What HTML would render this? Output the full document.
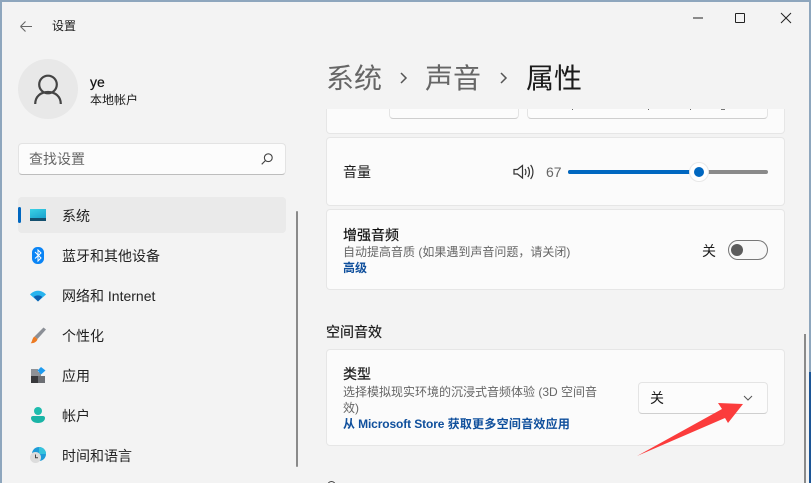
<!DOCTYPE html>
<html lang="zh"><head><meta charset="utf-8">
<style>
*{box-sizing:border-box}
html,body{margin:0;padding:0;width:811px;height:483px;overflow:hidden}
body{background:#f3f3f3;position:relative;font-family:"Liberation Sans","Noto Sans CJK SC",sans-serif;color:#1b1b1b}
.a{position:absolute;white-space:nowrap}
.card{position:absolute;left:326px;width:459px;background:#fbfbfb;border:1px solid #e6e6e6;border-radius:4px}
.nav{position:absolute;left:62px;font-size:14px;line-height:20px;color:#222;white-space:nowrap}
.sub{font-size:12px;line-height:16px;color:#666}
.link{font-size:12px;line-height:16px;color:#0f4f9c;font-weight:bold}
.btn{position:absolute;background:#fcfcfc;border:1px solid #e4e4e4;border-bottom-color:#cfcfcf;border-radius:4px}
svg{position:absolute;overflow:visible}
</style></head>
<body>
<div class="a" style="left:0;top:0;width:811px;height:2px;background:#8ea6bd"></div>
<div class="a" style="left:0;top:0;width:2px;height:483px;background:#8ea6bd"></div>
<div class="a" style="left:809px;top:0;width:2px;height:372px;background:#8ea6bd"></div>
<div class="a" style="left:809px;top:372px;width:2px;height:111px;background:#1c5596"></div>

<svg style="left:19px;top:19px" width="16" height="16" viewBox="0 0 16 16" fill="none" stroke="#666" stroke-width="1.1"><path d="M1.500 7.500H13M1.500 7.500L6.500 2.500M1.500 7.500L6.500 12.500"/></svg>
<div class="a" style="left:52px;top:18px;font-size:12px;line-height:17px">设置</div>

<div class="a" style="left:18px;top:59px;width:60px;height:60px;border-radius:50%;background:#e8e8e8"></div>
<svg style="left:18px;top:59px" width="60" height="60" fill="none" stroke="#444" stroke-width="2.2"><circle cx="30" cy="25.500" r="8.800"/><path d="M17.200 45c0-7.500 5.500-12 12.800-12s12.800 4.500 12.800 12"/></svg>
<div class="a" style="left:90px;top:74px;font-size:14px;line-height:17px;color:#111;-webkit-text-stroke:.2px #111">ye</div>
<div class="a" style="left:90px;top:92px;font-size:12px;line-height:17px">本地帐户</div>

<div class="btn" style="left:18px;top:143px;width:268px;height:32px;border-color:#e3e3e3;border-bottom-color:#bdbdbd"></div>
<div class="a" style="left:29px;top:149px;font-size:14px;line-height:20px;color:#666">查找设置</div>
<svg style="left:261px;top:153px" width="12" height="12" fill="none" stroke="#444" stroke-width="1.100"><circle cx="7.300" cy="4.700" r="3.900"/><path d="M4.500 7.500L.7 11.300"/></svg>

<div class="a" style="left:18px;top:197px;width:268px;height:36px;background:#eaeaea;border-radius:4px"></div>
<div class="a" style="left:18px;top:207px;width:3px;height:16px;background:#0067c0;border-radius:2px"></div>
<div class="a" style="left:296px;top:211px;width:2px;height:256px;background:#8a8a8a;border-radius:1px"></div>

<div class="a" style="left:30px;top:209px;width:16px;height:12px;background:linear-gradient(160deg,#3ad2e6,#1498c8)"></div>
<div class="a" style="left:30px;top:218px;width:16px;height:3px;background:#14506f"></div>
<div class="nav" style="top:206px">系统</div>

<svg style="left:32px;top:247px" width="12" height="17"><rect width="12" height="17" rx="5.500" fill="#0a84f5"/><path d="M3 5l6 6-3 3V3l3 3-6 5.500" fill="none" stroke="#fff" stroke-width="1"/></svg>
<div class="nav" style="top:246px">蓝牙和其他设备</div>

<svg style="left:30px;top:290px" width="16" height="12"><path d="M0 4.500C4.500 -.5 11.500 -.5 16 4.500L8 11.500Z" fill="#27b3ee"/><path d="M3.700 7C6 4.800 10 4.800 12.300 7L8 11.500Z" fill="#0c5fb0"/></svg>
<div class="nav" style="top:286px">网络和 Internet</div>

<svg style="left:30px;top:327px" width="16" height="17"><path d="M13.500 .5L16 2.500 7.500 12 4.500 9.500Z" fill="#8b8f96"/><path d="M4.500 9.500L7.500 12C7 15 3.500 16.500 .7 16.200 2.500 14.500 2 11 4.500 9.500Z" fill="#ec7a22"/></svg>
<div class="nav" style="top:326px">个性化</div>

<svg style="left:31px;top:367px" width="15" height="16"><rect y="2" width="7" height="7" fill="#8e9196"/><rect y="9" width="7" height="7" fill="#38393c"/><rect x="7" y="9" width="7" height="7" fill="#6c6f74"/><rect x="7" y="5" width="3" height="4" fill="#8e9196"/><path d="M10 0l4.500 3.500L10 7.500 6.500 3.500Z" fill="#1d9bf0"/></svg>
<div class="nav" style="top:366px">应用</div>

<svg style="left:31px;top:407px" width="14" height="16"><circle cx="7" cy="4" r="4" fill="#1ebcae"/><path d="M0 11c0-1.500 1-2 2-2h10c1 0 2 .5 2 2 0 3-3 5-7 5s-7-2-7-5Z" fill="#1ab4a6"/></svg>
<div class="nav" style="top:406px">帐户</div>

<svg style="left:30px;top:447px" width="16" height="16"><circle cx="9" cy="7" r="7" fill="#1e9bd8"/><path d="M9 0a7 7 0 0 1 7 7H9Z" fill="#35c3dc"/><circle cx="5.500" cy="10.500" r="5.500" fill="#dcdcdc"/><path d="M5.500 7.500v3.300h2.500" fill="none" stroke="#444" stroke-width="1"/></svg>
<div class="nav" style="top:446px">时间和语言</div>

<svg style="left:693px;top:17px" width="10" height="2"><path d="M0 1h10" stroke="#222" stroke-width="1"/></svg>
<div class="a" style="left:735px;top:13px;width:10px;height:10px;border:1px solid #222;border-radius:1px"></div>
<svg style="left:781px;top:13px" width="10" height="10" fill="none" stroke="#222" stroke-width="1"><path d="M0 0l10 10M10 0L0 10"/></svg>

<div class="card" style="top:90px;height:44px"></div>
<div class="btn" style="left:389px;top:90px;width:130px;height:29px"></div>
<div class="btn" style="left:527px;top:90px;width:241px;height:29px"></div>
<div class="a" style="left:320px;top:60px;width:470px;height:49px;background:#f3f3f3"></div>
<div class="a" style="left:572px;top:109px;width:1px;height:1px;background:#666"></div>
<div class="a" style="left:648px;top:109px;width:1px;height:1px;background:#666"></div>
<div class="a" style="left:690px;top:109px;width:1px;height:1px;background:#666"></div>
<div class="a" style="left:721px;top:109px;width:4px;height:1px;background:#777"></div>

<div class="a" style="left:326px;top:60px;font-size:28px;line-height:38px;color:#666">系统</div>
<svg style="left:400px;top:72px" width="8" height="12" fill="none" stroke="#555" stroke-width="1.500"><path d="M1 1l5 5-5 5"/></svg>
<div class="a" style="left:425px;top:60px;font-size:28px;line-height:38px;color:#666">声音</div>
<svg style="left:500px;top:72px" width="8" height="12" fill="none" stroke="#555" stroke-width="1.500"><path d="M1 1l5 5-5 5"/></svg>
<div class="a" style="left:526px;top:60px;font-size:28px;line-height:38px;color:#1b1b1b">属性</div>

<div class="card" style="top:137px;height:69px"></div>
<div class="a" style="left:343px;top:162px;font-size:14px;line-height:20px">音量</div>
<svg style="left:513px;top:163px" width="22" height="18" fill="none" stroke="#333" stroke-width="1.200"><path d="M1 6.500h3.500L9.500 2.500v12.500L4.500 11H1Z"/><path d="M12 6c1.300 1.700 1.300 4.300 0 6M14.800 4c2.200 3 2.200 7 0 10M17.600 2c3.100 4 3.100 10 0 14"/></svg>
<div class="a" style="left:546px;top:163px;font-size:14px;line-height:18px;color:#666">67</div>
<div class="a" style="left:568px;top:170px;width:200px;height:4px;background:#8a8a8a;border-radius:2px"></div>
<div class="a" style="left:568px;top:170px;width:125px;height:4px;background:#0067c0;border-radius:2px"></div>
<div class="a" style="left:689px;top:162px;width:20px;height:20px;border-radius:50%;background:#fff;border:1px solid #e8e8e8"></div>
<div class="a" style="left:694px;top:167px;width:10px;height:10px;border-radius:50%;background:#0067c0"></div>

<div class="card" style="top:209px;height:81px"></div>
<div class="a" style="left:343px;top:225px;font-size:14px;line-height:20px;color:#111;-webkit-text-stroke:.2px #111">增强音频</div>
<div class="a sub" style="left:343px;top:244px">自动提高音质 (如果遇到声音问题，请关闭)</div>
<div class="a link" style="left:343px;top:260px">高级</div>
<div class="a" style="left:702px;top:241px;font-size:14px;line-height:20px">关</div>
<div class="a" style="left:728px;top:240px;width:40px;height:20px;border:1px solid #777;border-radius:10px;background:#f8f8f8"></div>
<div class="a" style="left:731px;top:244px;width:12px;height:12px;border-radius:50%;background:#5c5c5c"></div>

<div class="a" style="left:326px;top:322px;font-size:14px;line-height:20px;-webkit-text-stroke:.2px #1b1b1b">空间音效</div>
<div class="card" style="top:349px;height:97px"></div>
<div class="a" style="left:343px;top:364px;font-size:14px;line-height:20px;-webkit-text-stroke:.2px #1b1b1b">类型</div>
<div class="a sub" style="left:343px;top:384px">选择模拟现实环境的沉浸式音频体验 (3D 空间音</div>
<div class="a sub" style="left:343px;top:400px">效)</div>
<div class="a link" style="left:343px;top:416px"><span style="letter-spacing:-.12px">从 Microsoft Store</span> <span style="letter-spacing:.25px">获取更多空间音效应用</span></div>
<div class="btn" style="left:638px;top:382px;width:130px;height:32px"></div>
<div class="a" style="left:650px;top:388px;font-size:14px;line-height:20px">关</div>
<svg style="left:743px;top:395px" width="10" height="6" fill="none" stroke="#555" stroke-width="1"><path d="M1 1l4 4 4-4"/></svg>
<svg style="left:0;top:0" width="811" height="483"><path d="M637 456L722 409L718 403L743 404L728 423L725 418Z" fill="#fb3c3c"/></svg>

<div class="a" style="left:327px;top:481px;width:9px;height:9px;border:1.500px solid #444;border-radius:50%"></div>
<div class="a" style="left:804px;top:334px;width:2px;height:149px;background:#8a8a8a"></div>
</body></html>
